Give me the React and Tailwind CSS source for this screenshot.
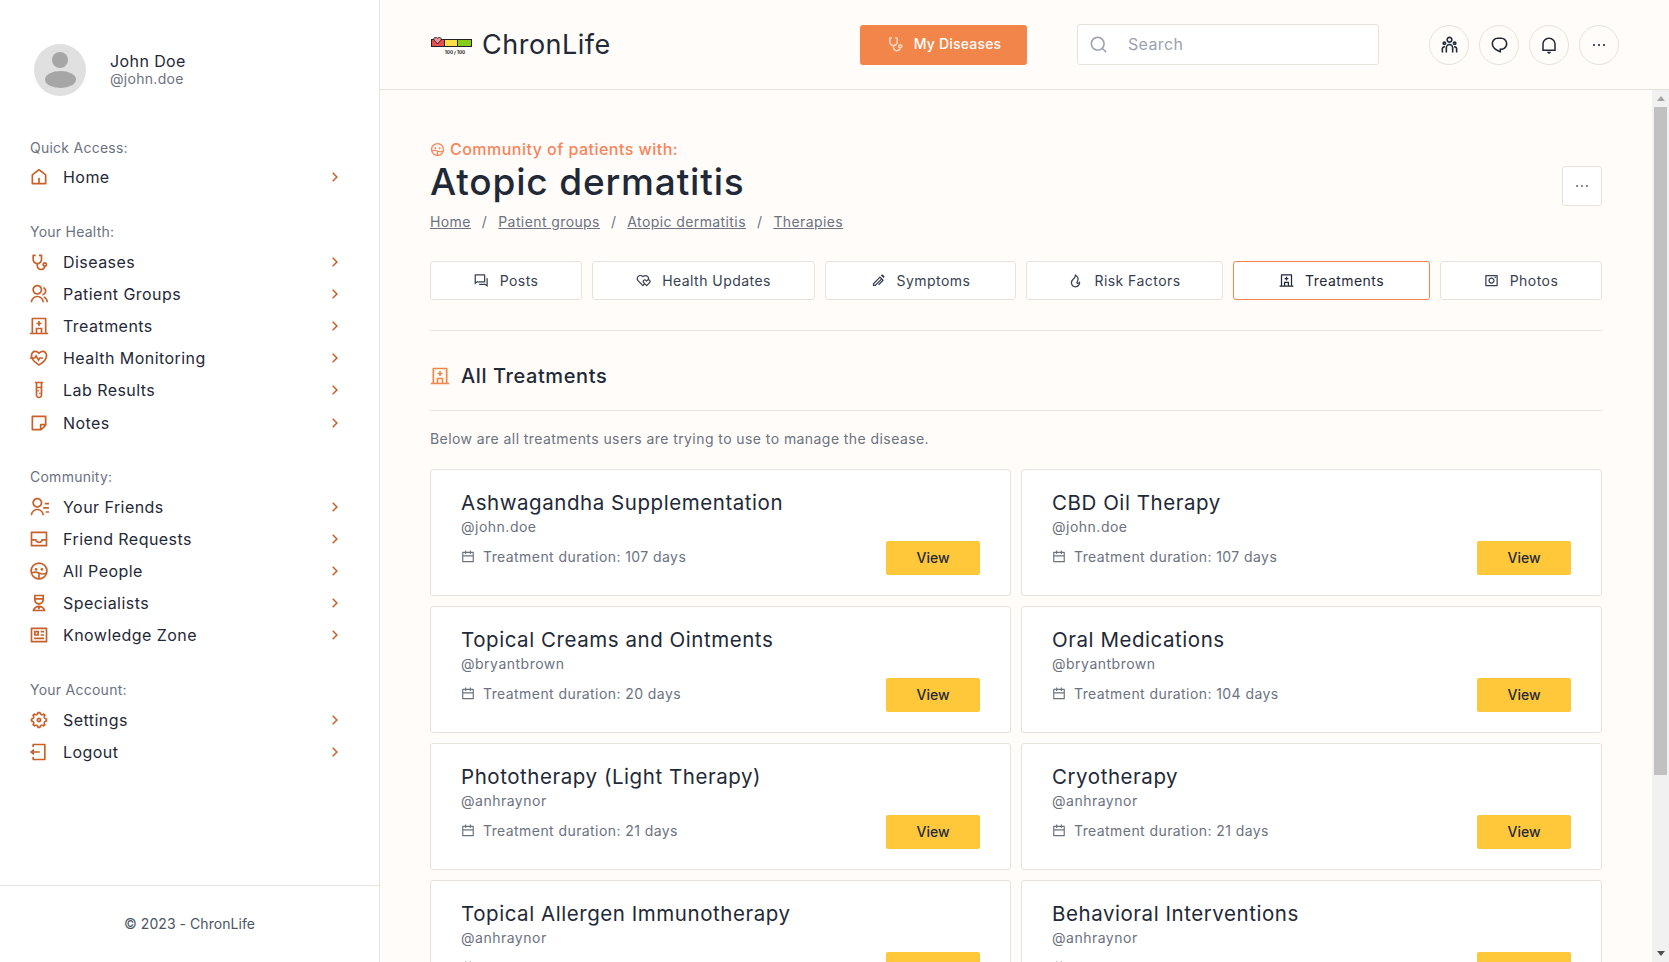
import React from 'react';
import {
  RiHome5Line, RiStethoscopeLine, RiGroupLine, RiHospitalLine, RiHeartPulseLine, RiTestTubeLine,
  RiStickyNoteLine, RiContactsLine, RiInboxLine, RiNurseLine, RiProfileLine, RiSettings5Line,
  RiLogoutBoxLine, RiArrowRightSLine, RiSearchLine, RiTeamLine, RiChat1Line, RiNotificationLine,
  RiMoreLine, RiQuestionAnswerLine, RiHeartsLine, RiBallPenLine, RiFireLine, RiCamera2Line, RiCalendarLine,
} from 'react-icons/ri';

// circle with two little heads, no package has this one
const PeopleIcon = ({ className }) => (
  <svg viewBox="0 0 24 24" fill="none" stroke="currentColor" strokeWidth="2" className={className}>
    <circle cx="12" cy="12" r="9.5" />
    <circle cx="8.5" cy="10" r="1.6" fill="currentColor" stroke="none" />
    <circle cx="15.5" cy="10" r="1.6" fill="currentColor" stroke="none" />
    <path d="M3 14.5c3-1.5 6-1.5 9 0s6 1.5 9 0M12 14.5V21" />
  </svg>
);

const Logo = () => (
  <svg viewBox="0 0 44 20" className="w-[44px] h-[20px] shrink-0">
    <rect x="1" y="4" width="41" height="8" fill="#222" />
    <rect x="2" y="5" width="12" height="6" fill="#e8504f" />
    <rect x="15" y="5" width="12" height="6" fill="#fde047" />
    <rect x="28" y="5" width="13" height="6" fill="#84cc16" />
    <path d="M7.5 9 4 5.2c-1-2 1-3.700 3.500-2 2.500-1.700 4.500 0 3.500 2z" fill="#f28b9a" stroke="#222" />
    <text x="25" y="18.500" fontSize="4.600" fontWeight="700" fill="#222" textAnchor="middle">100 / 100</text>
  </svg>
);

const sections = [
  { title: 'Quick Access:', items: [{ label: 'Home', icon: RiHome5Line }] },
  {
    title: 'Your Health:',
    items: [
      { label: 'Diseases', icon: RiStethoscopeLine },
      { label: 'Patient Groups', icon: RiGroupLine },
      { label: 'Treatments', icon: RiHospitalLine },
      { label: 'Health Monitoring', icon: RiHeartPulseLine },
      { label: 'Lab Results', icon: RiTestTubeLine },
      { label: 'Notes', icon: RiStickyNoteLine },
    ],
  },
  {
    title: 'Community:',
    items: [
      { label: 'Your Friends', icon: RiContactsLine },
      { label: 'Friend Requests', icon: RiInboxLine },
      { label: 'All People', icon: PeopleIcon },
      { label: 'Specialists', icon: RiNurseLine },
      { label: 'Knowledge Zone', icon: RiProfileLine },
    ],
  },
  {
    title: 'Your Account:',
    items: [
      { label: 'Settings', icon: RiSettings5Line },
      { label: 'Logout', icon: RiLogoutBoxLine },
    ],
  },
];

const tabs = [
  { label: 'Posts', icon: RiQuestionAnswerLine, width: 'w-[152px]' },
  { label: 'Health Updates', icon: RiHeartsLine, width: 'w-[223px]' },
  { label: 'Symptoms', icon: RiBallPenLine, width: 'w-[191px]' },
  { label: 'Risk Factors', icon: RiFireLine, width: 'w-[197px]' },
  { label: 'Treatments', icon: RiHospitalLine, width: 'w-[197px]', active: true },
  { label: 'Photos', icon: RiCamera2Line, width: 'w-[162px]' },
];

const treatments = [
  { name: 'Ashwagandha Supplementation', user: '@john.doe', days: 107 },
  { name: 'CBD Oil Therapy', user: '@john.doe', days: 107 },
  { name: 'Topical Creams and Ointments', user: '@bryantbrown', days: 20 },
  { name: 'Oral Medications', user: '@bryantbrown', days: 104 },
  { name: 'Phototherapy (Light Therapy)', user: '@anhraynor', days: 21 },
  { name: 'Cryotherapy', user: '@anhraynor', days: 21 },
  { name: 'Topical Allergen Immunotherapy', user: '@anhraynor', days: 21 },
  { name: 'Behavioral Interventions', user: '@anhraynor', days: 21 },
];

const headerIcons = [
  { icon: RiTeamLine, size: 'w-[19px] h-[19px]' },
  { icon: RiChat1Line, size: 'w-[19px] h-[19px]' },
  { icon: RiNotificationLine, size: 'w-[18px] h-[18px]' },
  { icon: RiMoreLine, size: 'w-[16px] h-[16px]' },
];

const Sidebar = () => (
  <aside className="w-[380px] shrink-0 h-full flex flex-col bg-white border-r border-[#e8e2da]">
    <div className="flex-1 pt-[44px] pl-[30px] pr-[35px]">
      <div className="flex items-center pl-[4px] mb-[42px]">
        <div className="w-[52px] h-[52px] rounded-full bg-[#e0e0e0] flex flex-col items-center justify-center gap-[3px]">
          <div className="w-[16px] h-[16px] rounded-full bg-[#a6a6a6]" />
          <div className="w-[31px] h-[17px] rounded-[50%] bg-[#a6a6a6]" />
        </div>
        <div className="ml-[24px] mb-[2px]">
          <div className="text-[16px] leading-[19px] tracking-[0.4px] text-[#1f2937]">John Doe</div>
          <div className="text-[14px] leading-[16px] tracking-[0.3px] text-[#6b7280]">@john.doe</div>
        </div>
      </div>
      {sections.map((section) => (
        <div key={section.title} className="mb-[28.7px]">
          <div className="h-[20px] mb-[3.3px] text-[14px] leading-[20px] tracking-[0.25px] text-[#6b7280]">{section.title}</div>
          {section.items.map((item) => (
            <div key={item.label} className="h-[32.2px] flex items-center">
              <item.icon className="w-[20px] h-[20px] -ml-[1px] shrink-0 text-[#c8602a]" />
              <span className="ml-[14px] flex-1 text-[16px] tracking-[0.45px] text-[#1f2937]">{item.label}</span>
              <RiArrowRightSLine className="w-[18px] h-[18px] text-[#c8602a]" />
            </div>
          ))}
        </div>
      ))}
    </div>
    <div className="h-[77px] pb-[2px] border-t border-[#e8e2da] flex items-center justify-center text-[14px] tracking-[0.05px] text-[#4b5563]">
      © 2023 - ChronLife
    </div>
  </aside>
);

const Header = () => (
  <header className="h-[90px] shrink-0 flex items-center px-[50px] border-b border-[#e8e2da]">
    <div className="flex items-center">
      <Logo />
      <span className="ml-[8px] pt-[2px] text-[27px] tracking-[0.5px] text-[#1f2937]">ChronLife</span>
    </div>
    <button className="ml-auto w-[167px] h-[40px] pb-[2px] rounded-[3px] bg-[#f2854a] flex items-center justify-center text-white text-[14px] font-medium tracking-[0.2px]">
      <RiStethoscopeLine className="w-[18px] h-[18px] text-[#fcd9c4] mr-[10px]" />
      My Diseases
    </button>
    <div className="ml-[50px] w-[302px] h-[41px] pb-[1px] rounded-[3px] bg-white border border-[#e8e2da] flex items-center pl-[11px]">
      <RiSearchLine className="w-[19px] h-[19px] text-[#9ca3af]" />
      <span className="ml-[20px] text-[16px] tracking-[0.35px] text-[#9ca3af]">Search</span>
    </div>
    <div className="ml-[50px] flex gap-[10px]">
      {headerIcons.map(({ icon: Icon, size }, i) => (
        <div key={i} className="w-[40px] h-[40px] rounded-full border border-[#e8e2da] flex items-center justify-center text-[#1f2937]">
          <Icon className={size} />
        </div>
      ))}
    </div>
  </header>
);

const Scrollbar = () => (
  <div className="w-[17px] shrink-0 bg-[#f1f1f1] flex flex-col items-center">
    <div className="h-[17px] flex items-center justify-center">
      <div className="w-0 h-0 border-x-[4px] border-x-transparent border-b-[5px] border-b-[#a3a3a3]" />
    </div>
    <div className="w-[13px] h-[668px] bg-[#c1c1c1]" />
    <div className="flex-1" />
    <div className="h-[17px] flex items-center justify-center">
      <div className="w-0 h-0 border-x-[4px] border-x-transparent border-t-[5px] border-t-[#505050]" />
    </div>
  </div>
);

const TreatmentCard = ({ name, user, days }) => (
  <div className="h-[127px] bg-white border border-[#e8e2da] rounded-[3px] px-[30px] pt-[18px] pb-[20px] flex justify-between items-end">
    <div className="self-stretch flex flex-col">
      <div className="text-[20.5px] leading-[29px] tracking-[0.55px] text-[#1f2937]">{name}</div>
      <div className="text-[14px] leading-[20px] tracking-[0.5px] text-[#6b7280]">{user}</div>
      <div className="mt-[10px] flex items-center text-[14px] leading-[20px] tracking-[0.42px] text-[#6b7280]">
        <RiCalendarLine className="w-[14px] h-[14px] mr-[8px]" />
        Treatment duration: {days} days
      </div>
    </div>
    <button className="w-[94px] h-[34px] pb-[2px] rounded-[2px] bg-[#ffc83a] text-[14px] font-medium text-[#1f2937]">View</button>
  </div>
);

export default function App() {
  return (
    <div className="h-screen flex overflow-hidden bg-[#fffcf9] font-['Inter','Noto_Sans',sans-serif]">
      <Sidebar />
      <div className="flex-1 min-w-0 flex flex-col">
        <Header />
        <div className="flex-1 min-h-0 flex">
          <main className="flex-1 min-w-0 overflow-y-auto [scrollbar-width:none] px-[50px] pt-[48px] pb-[178px]">
            <div className="flex justify-between">
              <div>
                <div className="h-[22px] flex items-center text-[16px] font-medium tracking-[0.47px] text-[#f7845a]">
                  <PeopleIcon className="w-[15px] h-[15px] mr-[5px]" />
                  Community of patients with:
                </div>
                <h1 className="text-[37px] leading-[44px] tracking-[0.83px] font-medium text-[#1f2937]">Atopic dermatitis</h1>
                <div className="mt-[8px] h-[20px] pb-[1px] flex items-center gap-[11px] text-[14px] tracking-[0.4px] text-[#6b7280]">
                  <span className="underline">Home</span><span>/</span>
                  <span className="underline">Patient groups</span><span>/</span>
                  <span className="underline">Atopic dermatitis</span><span>/</span>
                  <span className="underline">Therapies</span>
                </div>
              </div>
              <div className="mt-[28px] w-[40px] h-[40px] rounded-[3px] bg-white border border-[#e8e2da] flex items-center justify-center text-[#6b7280]">
                <RiMoreLine className="w-[16px] h-[16px]" />
              </div>
            </div>

            <div className="mt-[29px] flex gap-[10px] pb-[30px] border-b border-[#e8e2da]">
              {tabs.map((tab) => (
                <div
                  key={tab.label}
                  className={tab.active
                    ? `${tab.width} h-[39px] rounded-[3px] bg-white border border-[#f2854a] flex items-center justify-center text-[14px] tracking-[0.45px] text-[#1f2937]`
                    : `${tab.width} h-[39px] rounded-[3px] bg-white border border-[#e8e2da] flex items-center justify-center text-[14px] tracking-[0.45px] text-[#374151]`}
                >
                  <tab.icon className="w-[15px] h-[15px] mr-[11px]" />
                  {tab.label}
                </div>
              ))}
            </div>

            <div className="mt-[30px] h-[30px] flex items-center text-[20px] font-medium tracking-[0.6px] text-[#1f2937]">
              <RiHospitalLine className="w-[20px] h-[20px] mr-[11px] text-[#f2854a]" />
              All Treatments
            </div>
            <div className="mt-[19px] border-b border-[#e8e2da]" />
            <p className="mt-[18px] h-[20px] text-[14px] leading-[20px] tracking-[0.43px] text-[#6b7280]">
              Below are all treatments users are trying to use to manage the disease.
            </p>

            <div className="mt-[20px] grid grid-cols-2 gap-[10px]">
              {treatments.map((t) => (
                <TreatmentCard key={t.name} {...t} />
              ))}
            </div>
          </main>
          <Scrollbar />
        </div>
      </div>
    </div>
  );
}
